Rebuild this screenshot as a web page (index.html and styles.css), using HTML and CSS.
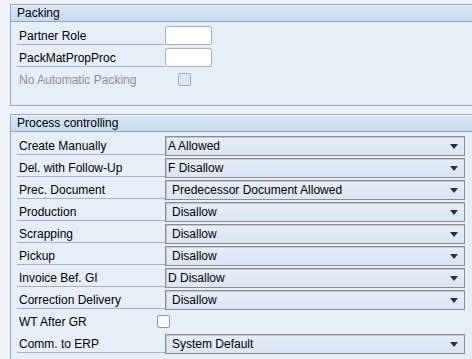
FILE: index.html
```html
<!DOCTYPE html>
<html lang="en">

<head>
    <meta charset="UTF-8">
    <title>Delivery Settings</title>
    <link rel="stylesheet" href="styles.css">
</head>

<body>
    <div class="group">
        <div class="group-head">Packing</div>
        <div class="group-body">
            <div class="row">
                <div class="label">Partner Role</div>
                <div class="field"></div>
            </div>
            <div class="row">
                <div class="label">PackMatPropProc</div>
                <div class="field"></div>
            </div>
            <div class="row">
                <div class="label plain disabled">No Automatic Packing</div>
                <div class="check check-off"></div>
            </div>
        </div>
    </div>

    <div class="group">
        <div class="group-head">Process controlling</div>
        <div class="group-body">
            <div class="row">
                <div class="label">Create Manually</div>
                <div class="select keyed">A Allowed<span class="arrow"></span></div>
            </div>
            <div class="row">
                <div class="label">Del. with Follow-Up</div>
                <div class="select keyed">F Disallow<span class="arrow"></span></div>
            </div>
            <div class="row">
                <div class="label">Prec. Document</div>
                <div class="select">Predecessor Document Allowed<span class="arrow"></span></div>
            </div>
            <div class="row">
                <div class="label">Production</div>
                <div class="select">Disallow<span class="arrow"></span></div>
            </div>
            <div class="row">
                <div class="label">Scrapping</div>
                <div class="select">Disallow<span class="arrow"></span></div>
            </div>
            <div class="row">
                <div class="label">Pickup</div>
                <div class="select">Disallow<span class="arrow"></span></div>
            </div>
            <div class="row">
                <div class="label">Invoice Bef. GI</div>
                <div class="select keyed">D Disallow<span class="arrow"></span></div>
            </div>
            <div class="row">
                <div class="label">Correction Delivery</div>
                <div class="select">Disallow<span class="arrow"></span></div>
            </div>
            <div class="row">
                <div class="label plain short">WT After GR</div>
                <div class="check"></div>
            </div>
            <div class="row">
                <div class="label">Comm. to ERP</div>
                <div class="select">System Default<span class="arrow"></span></div>
            </div>
        </div>
    </div>
</body>

</html>
```

FILE: styles.css
```css
body {
    margin: 0;
    background: #eef3f9;
    font-family: "Liberation Sans", Arial, sans-serif;
    font-size: 12px;
    color: #000;
    overflow: hidden;
}

.group {
    margin: 4px 0 0 10px;
    border: 1px solid #93abc8;
    border-right: none;
    background: #e6eef7;
}

.group + .group {
    margin-top: 8px;
}

.group-head {
    height: 16px;
    line-height: 16px;
    padding-left: 6px;
    background: linear-gradient(#d9e7f6, #c6daf0);
    border-bottom: 1px solid #8ea6c3;
    box-shadow: inset 0 1px #f5f9fd;
}

.group-body {
    padding: 3px 0 14px 6px;
}

.row {
    display: flex;
    height: 22px;
}

.label {
    box-sizing: border-box;
    width: 148px;
    height: 20px;
    line-height: 18px;
    padding: 2px 0 0 2px;
    border-bottom: 1px solid #a8b3c1;
}

.label.plain {
    border-bottom: none;
}

.label.short {
    width: 140px;
}

.disabled {
    color: #8f8f8f;
}

.field {
    box-sizing: border-box;
    width: 47px;
    height: 19px;
    margin-top: 1px;
    background: #fff;
    border: 1px solid #a7afb9;
    border-radius: 2px;
}

.check {
    box-sizing: border-box;
    width: 13px;
    height: 13px;
    margin-top: 4px;
    background: #fff;
    border: 1px solid #8e959e;
    border-radius: 2px;
}

.check-off {
    margin-left: 13px;
    background: #dde7f2;
    border-color: #a3aab3;
}

.select {
    position: relative;
    box-sizing: border-box;
    width: 300px;
    height: 20px;
    margin-top: 1px;
    padding-left: 6px;
    line-height: 18px;
    background: linear-gradient(#e6eef8, #dae6f3);
    border: 1px solid #8c8c8c;
    box-shadow: inset 1px 1px #c4c9d0;
}

.select.keyed {
    padding-left: 2px;
}

.arrow {
    position: absolute;
    right: 6px;
    top: 7px;
    width: 0;
    height: 0;
    border-left: 4px solid transparent;
    border-right: 4px solid transparent;
    border-top: 5px solid #1f2f52;
}
```
